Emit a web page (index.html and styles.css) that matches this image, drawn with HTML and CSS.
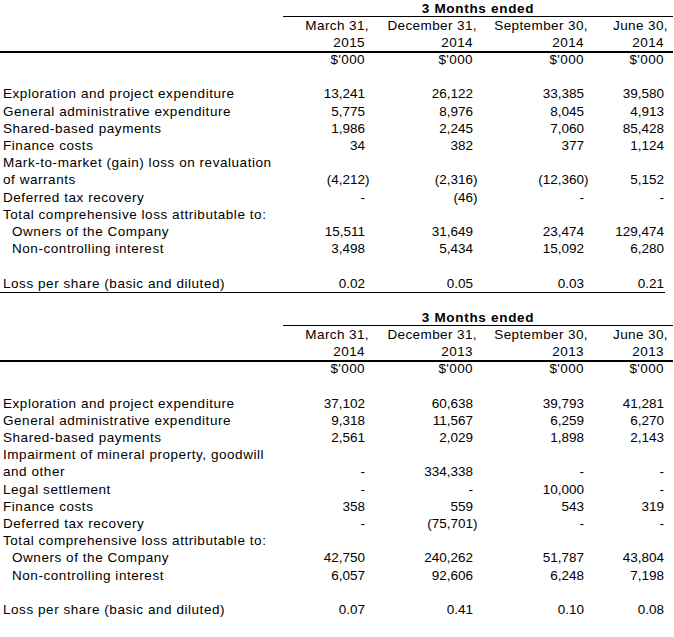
FILE: index.html
```html
<!DOCTYPE html>
<html>
<head>
<meta charset="utf-8">
<link rel="stylesheet" href="styles.css">
</head>
<body>
<div class="sheet">
  <div class="tbl first">
    <div class="row"><div class="hdr">3 Months ended</div></div>
    <div class="row head"><div></div><div class="v">March 31<span class="cm">,</span></div><div class="v">December 31<span class="cm">,</span></div><div class="v">September 30<span class="cm">,</span></div><div class="v">June 30<span class="cm">,</span></div></div>
    <div class="row head yr"><div></div><div class="v">2015</div><div class="v">2014</div><div class="v">2014</div><div class="v">2014</div></div>
    <div class="row head"><div></div><div class="v">$'000</div><div class="v">$'000</div><div class="v">$'000</div><div class="v">$'000</div></div>
    <div class="row"></div>
    <div class="row"><div class="lbl">Exploration and project expenditure</div><div class="v">13,241</div><div class="v">26,122</div><div class="v">33,385</div><div class="v">39,580</div></div>
    <div class="row"><div class="lbl">General administrative expenditure</div><div class="v">5,775</div><div class="v">8,976</div><div class="v">8,045</div><div class="v">4,913</div></div>
    <div class="row"><div class="lbl">Shared-based payments</div><div class="v">1,986</div><div class="v">2,245</div><div class="v">7,060</div><div class="v">85,428</div></div>
    <div class="row"><div class="lbl">Finance costs</div><div class="v">34</div><div class="v">382</div><div class="v">377</div><div class="v">1,124</div></div>
    <div class="row"><div class="lbl">Mark-to-market (gain) loss on revaluation</div></div>
    <div class="row"><div class="lbl">of warrants</div><div class="v">(4,212<span class="rp">)</span></div><div class="v">(2,316<span class="rp">)</span></div><div class="v">(12,360<span class="rp">)</span></div><div class="v">5,152</div></div>
    <div class="row"><div class="lbl">Deferred tax recovery</div><div class="v">-</div><div class="v">(46<span class="rp">)</span></div><div class="v">-</div><div class="v">-</div></div>
    <div class="row"><div class="lbl">Total comprehensive loss attributable to:</div></div>
    <div class="row"><div class="lbl ind">Owners of the Company</div><div class="v">15,511</div><div class="v">31,649</div><div class="v">23,474</div><div class="v">129,474</div></div>
    <div class="row"><div class="lbl ind">Non-controlling interest</div><div class="v">3,498</div><div class="v">5,434</div><div class="v">15,092</div><div class="v">6,280</div></div>
    <div class="row"></div>
    <div class="row total"><div class="lbl">Loss per share (basic and diluted)</div><div class="v">0.02</div><div class="v">0.05</div><div class="v">0.03</div><div class="v">0.21</div></div>
  </div>

  <div class="tbl second">
    <div class="row"><div class="hdr">3 Months ended</div></div>
    <div class="row head"><div></div><div class="v">March 31<span class="cm">,</span></div><div class="v">December 31<span class="cm">,</span></div><div class="v">September 30<span class="cm">,</span></div><div class="v">June 30<span class="cm">,</span></div></div>
    <div class="row head yr"><div></div><div class="v">2014</div><div class="v">2013</div><div class="v">2013</div><div class="v">2013</div></div>
    <div class="row head"><div></div><div class="v">$'000</div><div class="v">$'000</div><div class="v">$'000</div><div class="v">$'000</div></div>
    <div class="row"></div>
    <div class="row"><div class="lbl">Exploration and project expenditure</div><div class="v">37,102</div><div class="v">60,638</div><div class="v">39,793</div><div class="v">41,281</div></div>
    <div class="row"><div class="lbl">General administrative expenditure</div><div class="v">9,318</div><div class="v">11,567</div><div class="v">6,259</div><div class="v">6,270</div></div>
    <div class="row"><div class="lbl">Shared-based payments</div><div class="v">2,561</div><div class="v">2,029</div><div class="v">1,898</div><div class="v">2,143</div></div>
    <div class="row"><div class="lbl">Impairment of mineral property, goodwill</div></div>
    <div class="row"><div class="lbl">and other</div><div class="v">-</div><div class="v">334,338</div><div class="v">-</div><div class="v">-</div></div>
    <div class="row"><div class="lbl">Legal settlement</div><div class="v">-</div><div class="v">-</div><div class="v">10,000</div><div class="v">-</div></div>
    <div class="row"><div class="lbl">Finance costs</div><div class="v">358</div><div class="v">559</div><div class="v">543</div><div class="v">319</div></div>
    <div class="row"><div class="lbl">Deferred tax recovery</div><div class="v">-</div><div class="v">(75,701<span class="rp">)</span></div><div class="v">-</div><div class="v">-</div></div>
    <div class="row"><div class="lbl">Total comprehensive loss attributable to:</div></div>
    <div class="row"><div class="lbl ind">Owners of the Company</div><div class="v">42,750</div><div class="v">240,262</div><div class="v">51,787</div><div class="v">43,804</div></div>
    <div class="row"><div class="lbl ind">Non-controlling interest</div><div class="v">6,057</div><div class="v">92,606</div><div class="v">6,248</div><div class="v">7,198</div></div>
    <div class="row"></div>
    <div class="row total"><div class="lbl">Loss per share (basic and diluted)</div><div class="v">0.07</div><div class="v">0.41</div><div class="v">0.10</div><div class="v">0.08</div></div>
  </div>
</div>
</body>
</html>
```

FILE: styles.css
```css
body {
  margin: 0;
  background: #ffffff;
  color: #000000;
  font-family: "Liberation Sans", Arial, sans-serif;
  font-size: 13.5px;
}

.sheet {
  width: 673px;
}

.tbl.first {
  margin-top: -0.5px;
}

.tbl.second {
  margin-top: 17.1px;
}

.row {
  display: grid;
  grid-template-columns: 283px 87px 108px 111px 76px 8px;
  height: 17.2px;
  line-height: 17.2px;
  white-space: nowrap;
}

.hdr {
  grid-column: 2 / 7;
  text-align: center;
  font-weight: bold;
  letter-spacing: 0.7px;
  box-shadow: inset 0 -1px 0 #000;
}

.lbl {
  padding-left: 3px;
  letter-spacing: 0.55px;
}

.lbl.ind {
  padding-left: 12px;
}

.v {
  text-align: right;
  padding-right: 5px;
}

.row > .v:nth-child(5) {
  padding-right: 1px;
}

.head .v {
  letter-spacing: 0.4px;
}

.rp {
  margin-right: -4.5px;
}

.cm {
  margin-right: -4px;
}

.yr {
  border-bottom: 2px solid #000;
  margin-bottom: -2px;
}

.total {
  width: 665px;
  border-bottom: 1px solid #000;
  margin-bottom: -1px;
}
```
